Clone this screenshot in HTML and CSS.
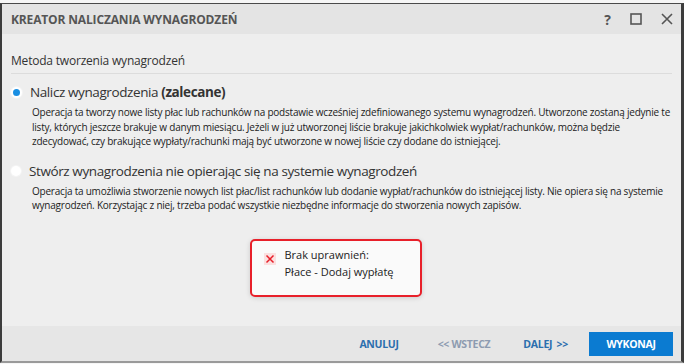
FILE: index.html
```html
<!DOCTYPE html>
<html lang="pl">
<head>
    <meta charset="UTF-8">
    <title>Kreator naliczania wynagrodzeń</title>
    <link rel="stylesheet" href="styles.css">
</head>
<body>
    <div class="window">
        <div class="titlebar">
            <span class="title">KREATOR NALICZANIA WYNAGRODZEŃ</span>
            <div class="controls">
                <span class="help">?</span>
                <svg width="12" height="12" viewBox="0 0 12 12"><rect x="1" y="1" width="10" height="10" fill="none" stroke="#555" stroke-width="1.6"/></svg>
                <svg width="12" height="12" viewBox="0 0 12 12"><path d="M1 1 L11 11 M11 1 L1 11" stroke="#555" stroke-width="1.6"/></svg>
            </div>
        </div>
        <div class="content">
            <div class="section-title">Metoda tworzenia wynagrodzeń</div>
            <div class="option">
                <div class="option-head">
                    <span class="radio checked"></span>
                    <span class="label">Nalicz wynagrodzenia <b>(zalecane)</b></span>
                </div>
                <p class="desc">Operacja ta tworzy nowe listy płac lub rachunków na podstawie wcześniej zdefiniowanego systemu wynagrodzeń. Utworzone zostaną jedynie te listy, których jeszcze brakuje w danym miesiącu. Jeżeli w już utworzonej liście brakuje jakichkolwiek wypłat/rachunków, można będzie zdecydować, czy brakujące wypłaty/rachunki mają być utworzone w nowej liście czy dodane do istniejącej.</p>
            </div>
            <div class="option">
                <div class="option-head">
                    <span class="radio"></span>
                    <span class="label">Stwórz wynagrodzenia nie opierając się na systemie wynagrodzeń</span>
                </div>
                <p class="desc">Operacja ta umożliwia stworzenie nowych list płac/list rachunków lub dodanie wypłat/rachunków do istniejącej listy. Nie opiera się na systemie wynagrodzeń. Korzystając z niej, trzeba podać wszystkie niezbędne informacje do stworzenia nowych zapisów.</p>
            </div>
            <div class="error-wrap">
                <div class="error">
                    <span class="error-icon"><svg width="10" height="10" viewBox="0 0 10 10"><path d="M1.5 1.5 L8.5 8.5 M8.5 1.5 L1.5 8.5" stroke="#e8202a" stroke-width="1.5"/></svg></span>
                    <div class="error-text">Brak uprawnień:<br>Płace - Dodaj wypłatę</div>
                </div>
            </div>
        </div>
        <div class="footer">
            <span class="btn link cancel">ANULUJ</span>
            <span class="btn disabled back">&lt;&lt; WSTECZ</span>
            <span class="btn link next">DALEJ &gt;&gt;</span>
            <span class="btn primary">WYKONAJ</span>
        </div>
    </div>
</body>
</html>
```

FILE: styles.css
```css
body {
    margin: 0;
    background-color: #f6f6f6;
    font-family: 'Open Sans', 'Noto Sans', sans-serif;
    color: #333;
}
.window {
    margin-top: 3px;
    height: 357px;
    border-top: 1px solid #4a4a4a;
    border-left: 2px solid #3c3c3c;
    border-right: 3px solid #3c3c3c;
    border-bottom: 2px solid #9a9a9a;
    display: flex;
    flex-direction: column;
    background-color: #eeeeee;
}
.titlebar {
    height: 30px;
    background-color: #e4e4e4;
    display: flex;
    align-items: center;
    justify-content: space-between;
    padding: 0 8px 0 9px;
}
.title {
    font-size: 12px;
    font-weight: bold;
    letter-spacing: -0.15px;
    color: #555;
}
.controls {
    display: flex;
    align-items: center;
    gap: 19px;
}
.help {
    font-size: 14px;
    color: #555;
    font-weight: bold;
}
.content {
    flex: 1;
    padding: 0 9px;
}
.section-title {
    font-size: 12px;
    letter-spacing: -0.2px;
    padding: 18px 0 4px 0;
    border-bottom: 1px solid #dcdcdc;
}
.option {
    margin-top: 9px;
}
.option + .option {
    margin-top: 13px;
}
.option-head {
    display: flex;
    align-items: center;
    gap: 8px;
}
.radio {
    width: 10px;
    height: 10px;
    border-radius: 50%;
    background-color: #fff;
    box-shadow: 0 0 0 1px #f4f4f4;
}
.radio.checked {
    background-color: #1a8fe3;
    border: 2px solid #fff;
    width: 7px;
    height: 7px;
}
.label {
    font-size: 13.5px;
    letter-spacing: -0.4px;
}
.desc {
    margin: 4px 0 0 21px;
    font-size: 10px;
    letter-spacing: -0.22px;
    line-height: 14.5px;
    color: #222;
}
.error-wrap {
    display: flex;
    justify-content: center;
    margin-top: 26px;
}
.error {
    width: 150px;
    height: 44px;
    border: 2px solid #e8202a;
    border-radius: 5px;
    background-color: #fafafa;
    box-shadow: 0 1px 5px rgba(0, 0, 0, 0.15);
    display: flex;
    padding: 5px 6px 5px 12px;
    gap: 9px;
    margin-left: -12px;
}
.error-icon {
    margin-top: 7px;
    width: 12px;
    height: 12px;
    background-color: #fbe0e0;
    display: flex;
    align-items: center;
    justify-content: center;
}
.error-text {
    font-size: 11px;
    line-height: 17px;
    color: #222;
}
.footer {
    height: 35px;
    background-color: #e6e6e6;
    display: flex;
    align-items: center;
    justify-content: flex-end;
    padding-right: 8px;
}
.btn {
    font-size: 10.5px;
    font-weight: bold;
    letter-spacing: -0.3px;
    text-align: center;
}
.link {
    color: #2c6fae;
}
.disabled {
    color: #8d9bb0;
}
.cancel {
    margin-right: 39px;
}
.back {
    margin-right: 33px;
}
.next {
    margin-right: 21px;
    word-spacing: 2px;
}
.primary {
    width: 84px;
    height: 24px;
    line-height: 24px;
    background-color: #0b7bd1;
    color: #fff;
}
```
